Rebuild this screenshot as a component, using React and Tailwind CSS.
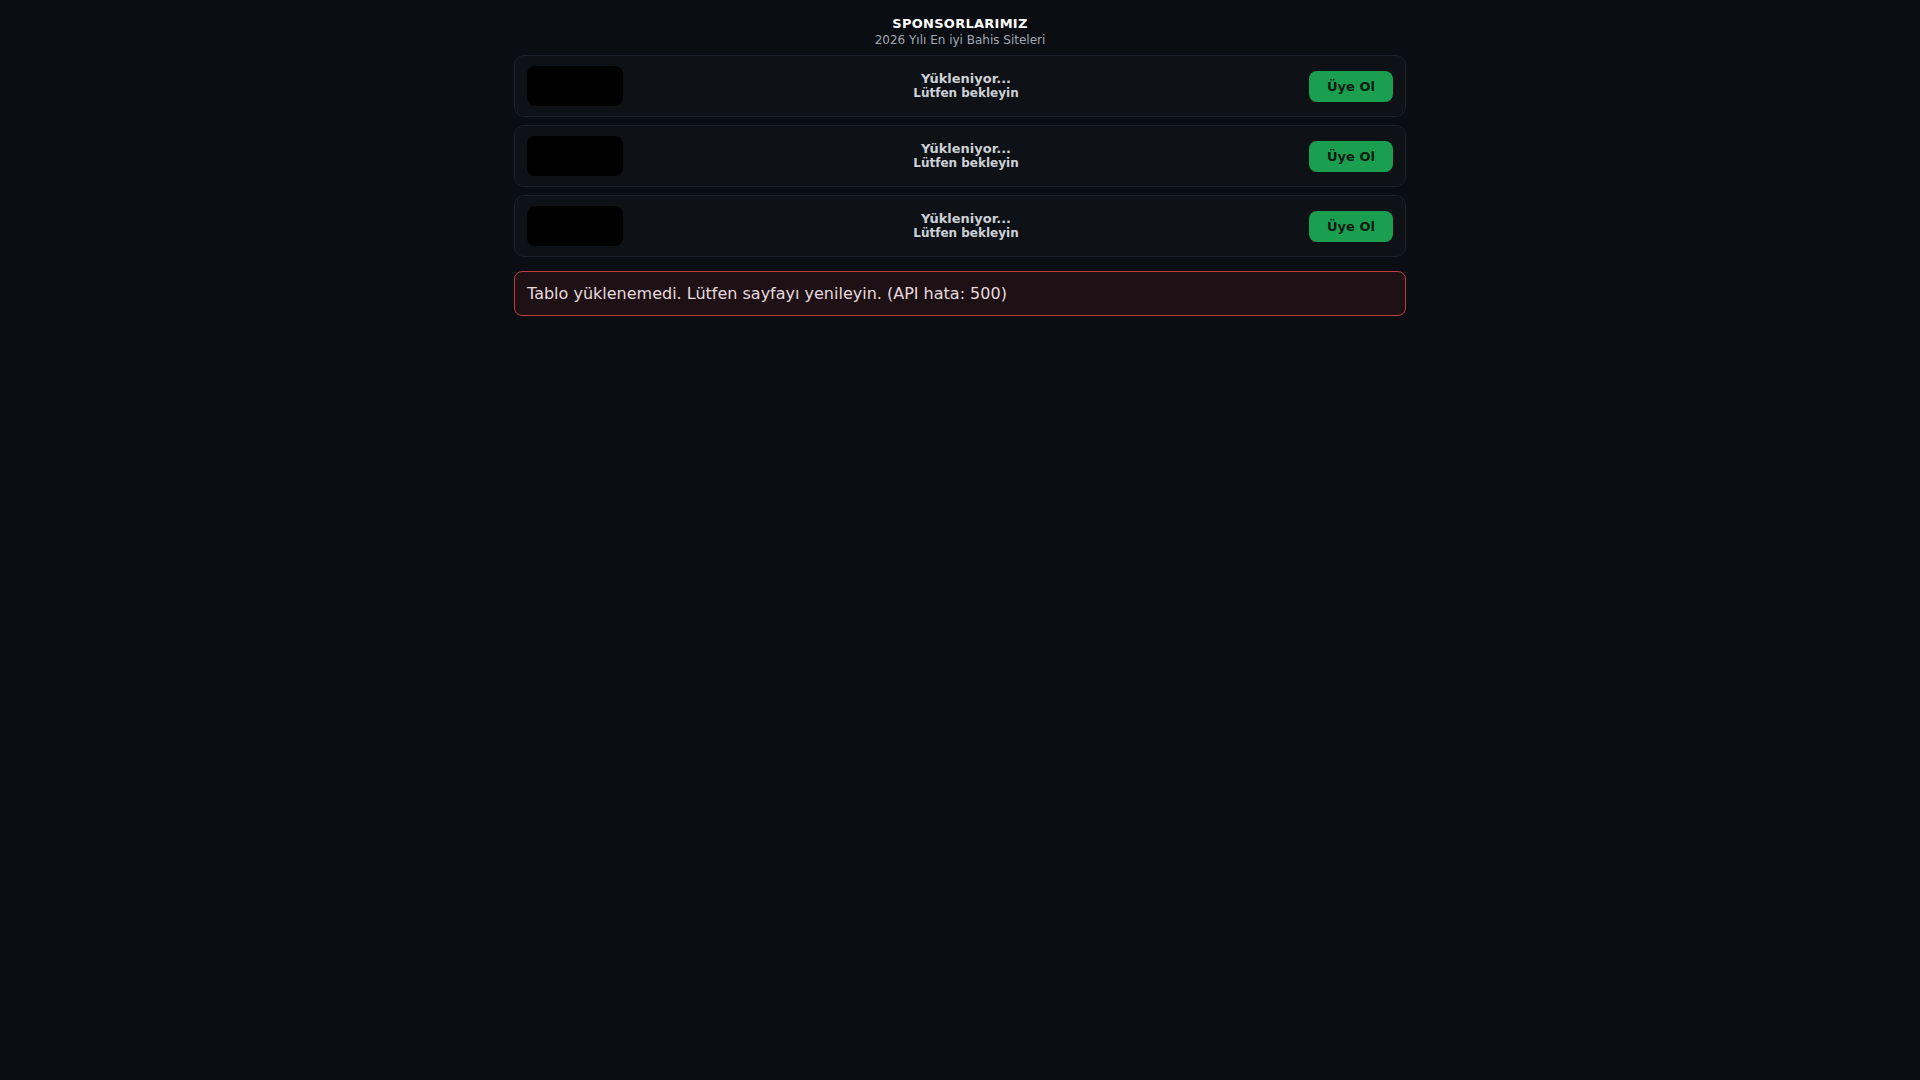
export default function App() {
  const rows = [0, 1, 2];
  return (
    <div
      className="min-h-screen w-full bg-[#0a0d12] text-white"
      style={{ fontFamily: '"DejaVu Sans", "Noto Sans", sans-serif' }}
    >
      <div className="mx-auto w-[892px] pt-[16px]">
        <div className="flex flex-col items-center">
          <div className="text-[13px] font-bold leading-[16px] tracking-[0.02em] text-white">
            SPONSORLARIMIZ
          </div>
          <div className="text-[12px] leading-[16px] text-[#a3a9b3]">
            2026 Yılı En iyi Bahis Siteleri
          </div>
        </div>
        <div className="mt-[7px] flex flex-col gap-[8px]">
          {rows.map((i) => (
            <div
              key={i}
              className="flex h-[62px] items-center gap-4 rounded-[10px] border border-[#1b222b] bg-[#0e1217] px-3"
            >
              <div className="h-[40px] w-[96px] shrink-0 rounded-lg bg-black" />
              <div className="flex-1 text-center font-bold text-[#cdd1d6]">
                <div className="text-[13px] leading-[14px]">Yükleniyor...</div>
                <div className="text-[12px] leading-[14px]">Lütfen bekleyin</div>
              </div>
              <button className="mt-[1px] h-[31px] w-[84px] shrink-0 rounded-lg bg-[#1a9f50] pt-[1px] text-[13px] font-bold text-[#0a1a10]">
                Üye Ol
              </button>
            </div>
          ))}
        </div>
        <div className="mt-[14px] flex h-[45px] items-center rounded-lg border border-[#c23b40] bg-[#1e1116] px-3 text-[16px] text-[#e6dadd]">
          Tablo yüklenemedi. Lütfen sayfayı yenileyin. (API hata: 500)
        </div>
      </div>
    </div>
  );
}
